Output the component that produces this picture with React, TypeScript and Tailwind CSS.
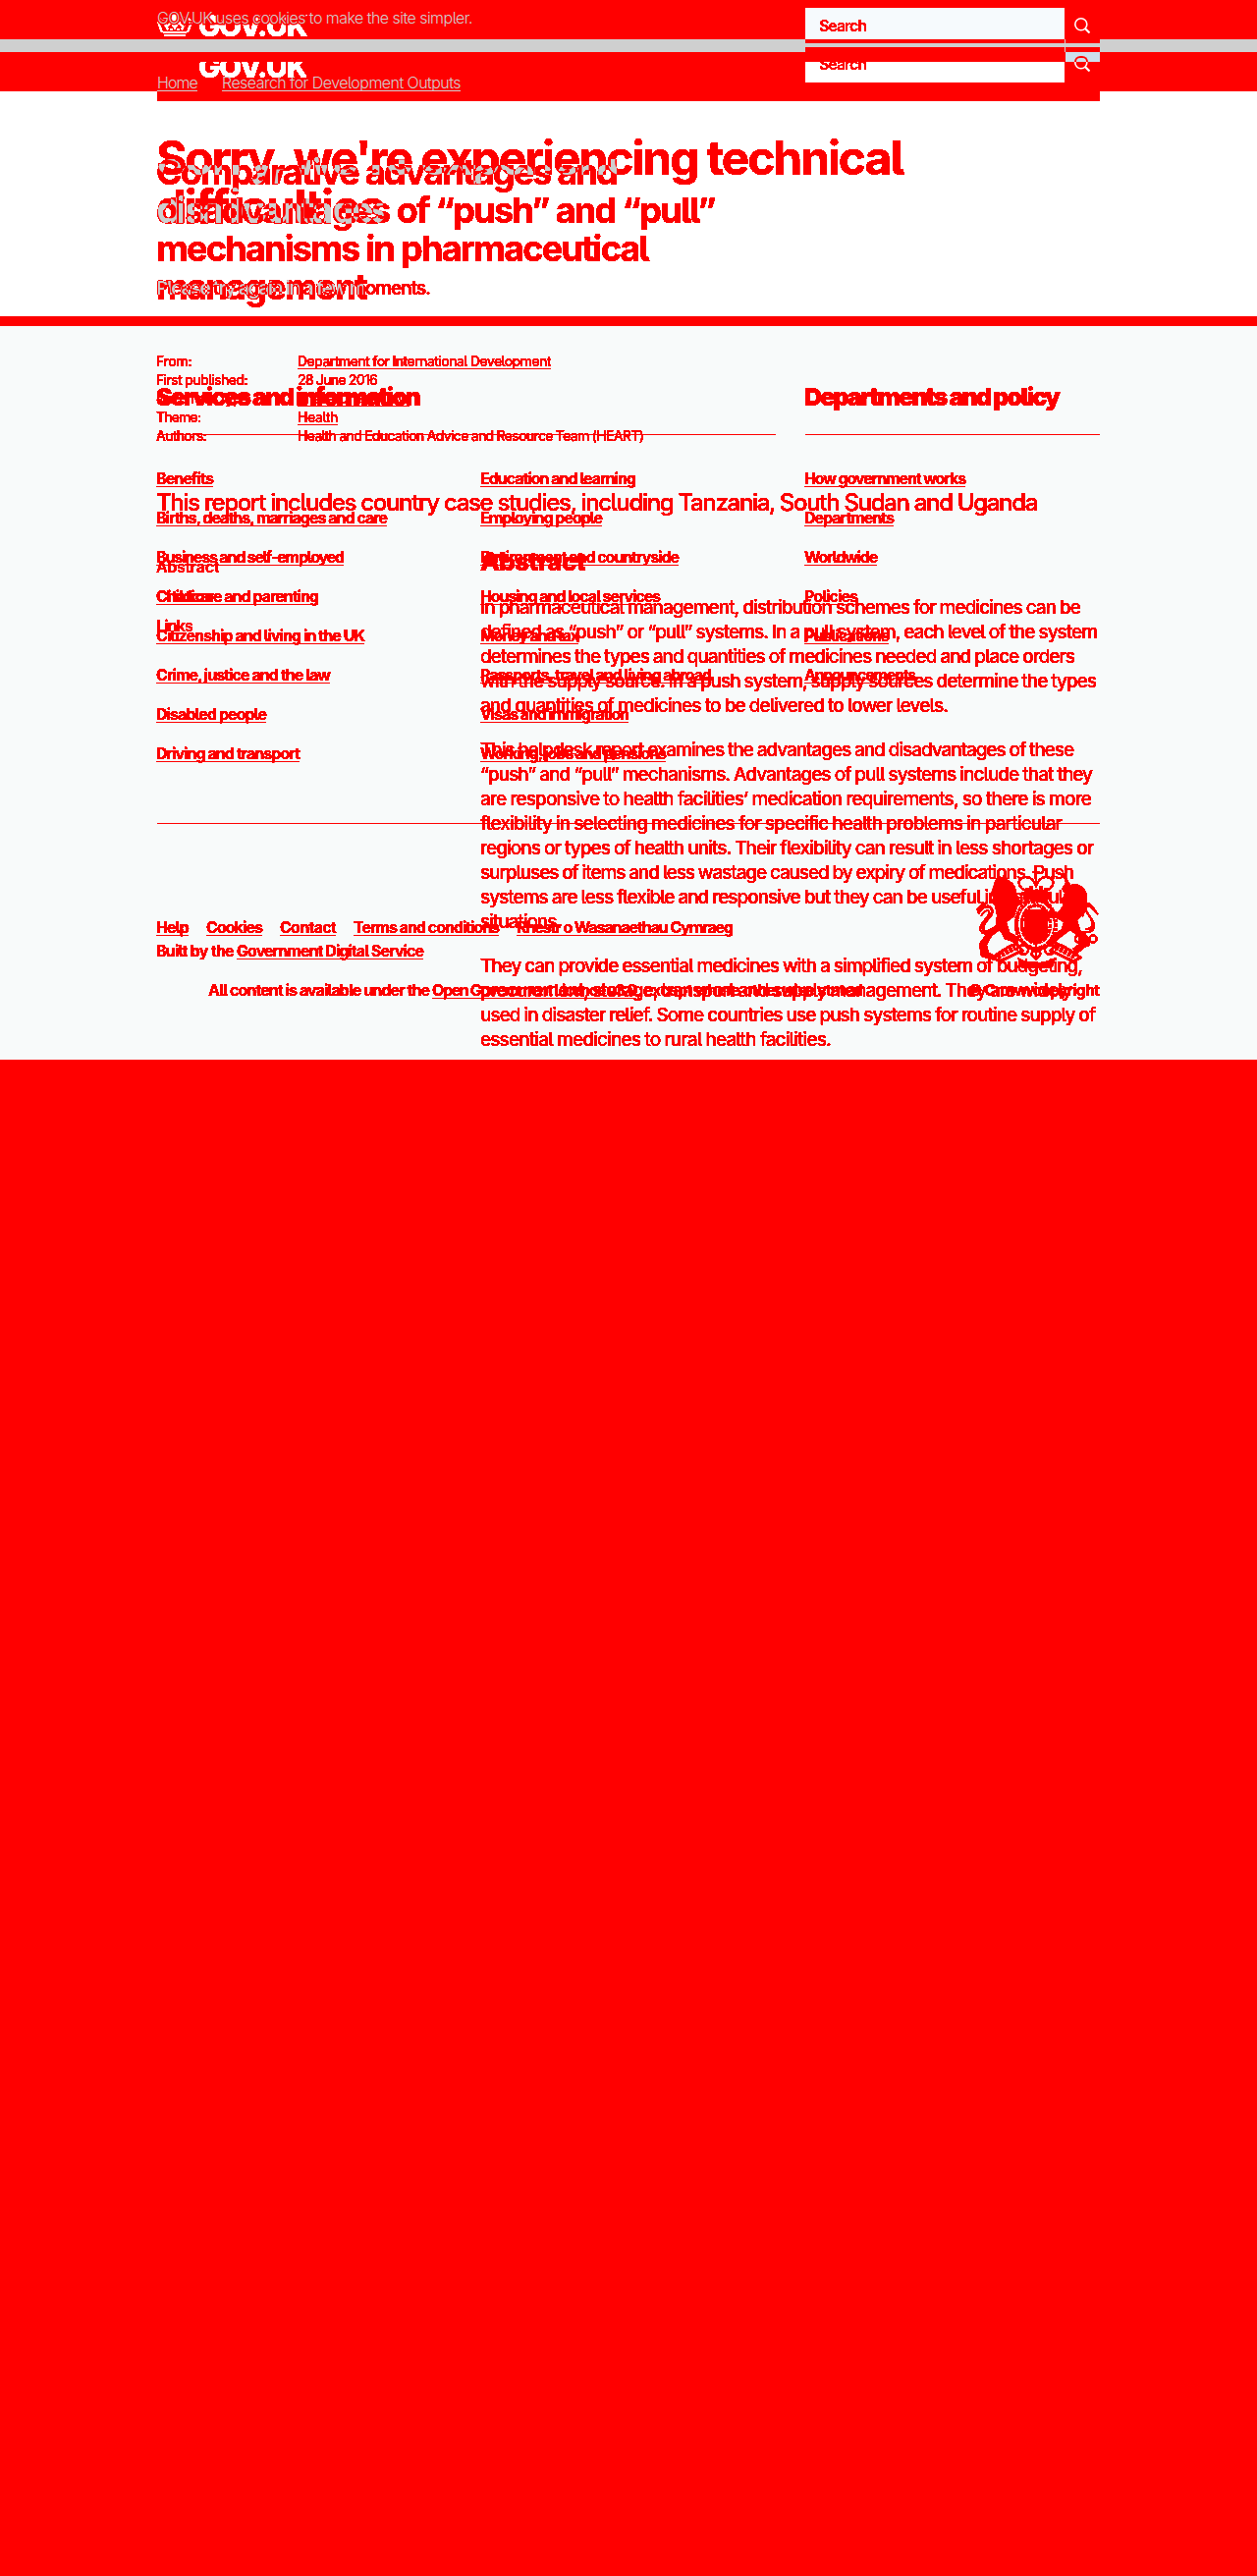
import { useLayoutEffect, useRef } from "react";

/* Single line of text whose tracking is adjusted so that it spans w pixels. */
function Fit({ w, children, className = "" }: { w: number; children: string; className?: string }) {
  const ref = useRef<HTMLSpanElement>(null);
  useLayoutEffect(() => {
    const el = ref.current;
    if (!el) return;
    el.style.letterSpacing = "0px";
    const gap = (w - el.getBoundingClientRect().width) / children.length;
    el.style.letterSpacing = `${gap}px`;
  }, [w, children]);
  return (
    <span ref={ref} className={`inline-block whitespace-pre ${className}`}>
      {children}
    </span>
  );
}

const link = "underline decoration-1 underline-offset-2 [text-decoration-skip-ink:none]";

type Line = [string, number];

const services: Line[] = [
  ["Benefits", 58],
  ["Births, deaths, marriages and care", 235],
  ["Business and self-employed", 191],
  ["Childcare and parenting", 165],
  ["Citizenship and living in the UK", 212],
  ["Crime, justice and the law", 177],
  ["Disabled people", 112],
  ["Driving and transport", 146],
];
const services2: Line[] = [
  ["Education and learning", 158],
  ["Employing people", 124],
  ["Environment and countryside", 202],
  ["Housing and local services", 183],
  ["Money and tax", 100],
  ["Passports, travel and living abroad", 235],
  ["Visas and immigration", 151],
  ["Working, jobs and pensions", 189],
];
const policy: Line[] = [
  ["How government works", 164],
  ["Departments", 91],
  ["Worldwide", 74],
  ["Policies", 54],
  ["Publications", 86],
  ["Announcements", 113],
];
const meta: [string, number, string, number, boolean][] = [
  ["From:", 36, "Department for International Development", 258, true],
  ["First published:", 93, "28 June 2016", 81, false],
  ["Document Type:", 96, "Literature review", 114, true],
  ["Theme:", 45, "Health", 41, true],
  ["Authors:", 51, "Health and Education Advice and Resource Team (HEART)", 352, false],
];
const paragraphs: Line[][] = [
  [
    ["In pharmaceutical management, distribution schemes for medicines can be", 611],
    ["defined as “push” or “pull” systems. In a pull system, each level of the system", 628],
    ["determines the types and quantities of medicines needed and place orders", 605],
    ["with the supply source. In a push system, supply sources determine the types", 627],
    ["and quantities of medicines to be delivered to lower levels.", 476],
  ],
  [
    ["This helpdesk report examines the advantages and disadvantages of these", 604],
    ["“push” and “pull” mechanisms. Advantages of pull systems include that they", 623],
    ["are responsive to health facilities’ medication requirements, so there is more", 622],
    ["flexibility in selecting medicines for specific health problems in particular", 592],
    ["regions or types of health units. Their flexibility can result in less shortages or", 624],
    ["surpluses of items and less wastage caused by expiry of medications. Push", 604],
    ["systems are less flexible and responsive but they can be useful in particular", 609],
    ["situations.", 82],
  ],
  [
    ["They can provide essential medicines with a simplified system of budgeting,", 613],
    ["procurement, storage, transport and supply management. They are widely", 602],
    ["used in disaster relief. Some countries use push systems for routine supply of", 626],
    ["essential medicines to rural health facilities.", 357],
  ],
];

function LinkList({ items }: { items: Line[] }) {
  return (
    <ul className="flex flex-col gap-5 text-[16px] leading-5 font-bold">
      {items.map(([t, w]) => (
        <li key={t} className="h-5">
          <Fit w={w} className={link}>{t}</Fit>
        </li>
      ))}
    </ul>
  );
}

function Crown() {
  return (
    <svg width="36" height="25" viewBox="0 0 36 25" fill="none" stroke="#fff" strokeWidth="2">
      <path d="M7 23h22M5 20 2 12M31 20l3-8M6 20h24" />
      <path d="M2 12c-2-5 3-8 6-4l2 7 3-5 5 5 5-5 3 5 2-7c3-4 8-1 6 4" strokeDasharray="3 1" />
      <path d="M8 12l3 5M28 12l-3 5M18 11v6M15 13h6M13 17h3M20 17h3" />
      <circle cx="18" cy="6" r="2.5" fill="#fff" />
      <circle cx="10" cy="6" r="1.5" />
      <circle cx="26" cy="6" r="1.5" />
      <path d="M18 0v4M15 2h6" />
    </svg>
  );
}

function Magnifier() {
  return (
    <svg width="16" height="16" viewBox="0 0 16 16" fill="none" stroke="#fff" strokeWidth="1.6">
      <circle cx="6.8" cy="6.8" r="6" />
      <path d="M11 11l4.5 4.5" strokeWidth="2.2" />
    </svg>
  );
}

function Crest() {
  return (
    <svg width="125" height="102" viewBox="0 0 125 102" fill="none" stroke="#f00" strokeWidth="2">
      <path d="M61 0v14M57 4h8M54 25h16" />
      <path d="M50 23c-10-6-7-14 1-14 5 0 8 4 10 9 2-5 5-9 10-9 8 0 11 8 1 14z" />
      <path d="M46 26h31M48 30h27M52 20v8M56 18v10M66 18v10M71 20v8" strokeWidth="2.5" />
      <ellipse cx="61" cy="57" rx="20" ry="25" strokeWidth="4" strokeDasharray="3 1" />
      <ellipse cx="61" cy="57" rx="14.5" ry="19" strokeWidth="3" strokeDasharray="4 1" />
      <path d="M50 43h22v17c0 8-5 12-11 15-6-3-11-7-11-15z" fill="#f00" />
      <path fill="#f00" stroke="none" d="M19 14l3-7 4 3 3-5 3 7c6 2 9 8 9 14l5 10-4 3-3 10-8 6 3 10 10 6-2 6-13-5-5-9-8 6-5 9 2 8 9 4-3 4-14-4-2-13 8-11 9-5 1-13-2-10-4-4 3-4-3-4z" />
      <path d="M1 43l7-8M2 46c5-8 12-9 14-4 3 7-10 11-9 20 3 6 9 0 14-3M5 39l6-4" strokeWidth="2.5" />
      <path d="M5 49c4-7 8-7 8-4 0 6-9 10-9 17 2 8 10 4 15-1" strokeWidth="1.5" />
      <path fill="#f00" stroke="none" d="M87 1l9 16c8-3 17 3 17 13l-2 15-8 8 3 10 8 7-1 9-10 8-5-5 7-5-1-7-8-7-12 9-7 7-4-2 5-9 9-6 2-7-9-5-6 1-3-6 5-2 7 2 6-7-3-6 5-5-4-6 4-6z" />
      <path d="M111 62c12 1 7-10 3-15-5-7-2-12 2-10 4 3 5 8 8 10M109 49c-4-9 6-14 10-7M108 65c17 2 12-10 8-15" strokeWidth="2" />
      <circle cx="105" cy="72" r="4" />
      <circle cx="112" cy="76" r="3" />
      <circle cx="119" cy="72" r="3.5" />
      <path d="M17 91c8-6 14-11 24-14l6 7-23 11zM106 91c-8-6-14-11-24-14l-6 7 23 11z" strokeWidth="2.5" />
      <path d="M22 90l18-9M100 90l-18-9" strokeWidth="5" strokeDasharray="3 1.5" />
      <path d="M41 84c3-9 13-6 12 0-2 6-10 4-8 0M82 84c-3-9-13-6-12 0 2 6 10 4 8 0M54 80l7 6 7-6M61 78v15M56 87l5 6 5-6-5-6z" />
      <path d="M44 93c11 6 23 6 35 0l-2 7c-10 3-21 3-31 0z" fill="#f00" />
    </svg>
  );
}

function ErrorPage() {
  return (
    <div className="col-start-1 row-start-1 flex flex-col">
      <h1 className="mt-[43px] text-[48px] leading-[50px] font-bold">
        <div className="h-[50px]"><Fit w={760}>Sorry, we're experiencing technical</Fit></div>
        <div className="h-[50px]"><Fit w={232}>difficulties</Fit></div>
      </h1>
      <p className="mt-[45px] h-[25px] text-[19px] leading-[25px] font-semibold">
        <Fit w={279}>Please try again in a few moments.</Fit>
      </p>
      <div className="mt-[83px] grid h-[30px] grid-cols-[660px_300px] text-[25px] leading-[30px] font-black">
        <h2><Fit w={268}>Services and information</Fit></h2>
        <h2><Fit w={259}>Departments and policy</Fit></h2>
      </div>
      <div className="mt-[58px] grid h-[320px] grid-cols-[330px_330px_300px]">
        <LinkList items={services} />
        <LinkList items={services2} />
        <LinkList items={policy} />
      </div>
      <footer className="mt-[87px] flex justify-between text-[16px] leading-5 font-bold">
        <div className="pt-[50px]">
          <ul className="flex h-5 gap-[18px]">
            {([["Help", 33], ["Cookies", 57], ["Contact", 57], ["Terms and conditions", 148], ["Rhestr o Wasanaethau Cymraeg", 220]] as Line[]).map(([t, w]) => (
              <li key={t}><Fit w={w} className={link}>{t}</Fit></li>
            ))}
          </ul>
          <p className="mt-1 flex h-5">
            <Fit w={82}>{"Built by the "}</Fit>
            <Fit w={190} className={link}>Government Digital Service</Fit>
          </p>
          <p className="mt-5 ml-[53px] flex h-5">
            <Fit w={228}>{"All content is available under the "}</Fit>
            <Fit w={208} className={link}>Open Government Licence v3.0</Fit>
            <Fit w={230}>, except where otherwise stated</Fit>
          </p>
        </div>
        <div className="flex flex-col items-end gap-3">
          <Crest />
          <Fit w={133}>© Crown copyright</Fit>
        </div>
      </footer>
    </div>
  );
}

function ReportPage() {
  return (
    <div className="col-start-1 row-start-1 flex flex-col mix-blend-screen">
      <h1 className="mt-[63px] text-[36px] leading-[39px] font-bold [filter:url(#swap)]">
        {([["Comparative advantages and", 469], ["disadvantages of “push” and “pull”", 569], ["mechanisms in pharmaceutical", 501], ["management", 214]] as Line[]).map(([t, w]) => (
          <div key={t} className="h-[39px]"><Fit w={w}>{t}</Fit></div>
        ))}
      </h1>
      <dl className="mt-[46px] text-[14px] leading-[19px] font-medium">
        {meta.map(([k, kw, v, vw, isLink]) => (
          <div key={k} className="grid h-[19px] grid-cols-[144px_1fr]">
            <dt><Fit w={kw}>{k}</Fit></dt>
            <dd><Fit w={vw} className={isLink ? link : ""}>{v}</Fit></dd>
          </div>
        ))}
      </dl>
      <p className="mt-11 h-[30px] text-[24px] leading-[30px] font-medium">
        <Fit w={897}>This report includes country case studies, including Tanzania, South Sudan and Uganda</Fit>
      </p>
      <div className="mt-[30px] grid grid-cols-[330px_630px]">
        <nav className="flex flex-col gap-[10px] pt-[10px] text-[16px] leading-5 font-semibold">
          <div className="h-5"><Fit w={64}>Abstract</Fit></div>
          <div className="h-5"><Fit w={59}>Citation</Fit></div>
          <div className="h-5"><Fit w={37}>Links</Fit></div>
        </nav>
        <article>
          <h2 className="h-[30px] text-[26px] leading-[30px] font-extrabold"><Fit w={107}>Abstract</Fit></h2>
          <div className="mt-[19px] flex flex-col gap-5 text-[19px] leading-[25px] font-medium">
            {paragraphs.map((p, i) => (
              <div key={i}>
                {p.map(([t, w]) => (
                  <div key={t} className="h-[25px]"><Fit w={w}>{t}</Fit></div>
                ))}
              </div>
            ))}
          </div>
        </article>
      </div>
    </div>
  );
}

function Header() {
  return (
    <header className="relative h-[93px] bg-[#f00]">
      <div className="absolute inset-x-0 top-10 h-[13px] bg-[#cfcfcf]" />
      <div className="relative mx-auto flex h-[103px] w-[960px] justify-between">
        <div className="relative w-[480px]">
          <div className="[filter:url(#crisp)]">
            <div className="absolute top-[13px] left-0"><Crown /></div>
            <div className="absolute top-[8px] left-[42px] text-[30px] leading-[36px] font-extrabold text-white">
              <Fit w={110}>GOV.UK</Fit>
            </div>
            <div className="absolute top-[63px] left-[42px] flex h-[16px] items-end overflow-hidden text-[30px] leading-[36px] font-extrabold text-white">
              <div className="-mb-[7px]"><Fit w={110}>GOV.UK</Fit></div>
            </div>
          </div>
          <p className="absolute top-[8px] left-0 text-[16px] leading-5 font-light text-[#cfcfcf] [-webkit-text-stroke:3px_#f00] [paint-order:stroke_fill]">
            <Fit w={321}>GOV.UK uses cookies to make the site simpler.</Fit>
          </p>
          <nav className="absolute top-[74px] left-0 flex gap-[25px] text-[16px] leading-5 font-light text-[#cfcfcf]">
            <Fit w={41} className={link}>Home</Fit>
            <Fit w={243} className={link}>Research for Development Outputs</Fit>
          </nav>
        </div>
        <div className="grid h-[103px] w-[300px] grid-cols-[264px_1px_35px] grid-rows-[8px_32px_4px_4px_5px_10px_21px_19px] text-[#f00]">
          <div className="col-start-1 row-start-2 overflow-hidden bg-[#f6fafd] pl-[14px] text-[16px] font-semibold">
            <div className="pt-[8px] leading-5 [filter:url(#crisp)]"><Fit w={48}>Search</Fit></div>
          </div>
          <div className="col-start-3 row-start-2 pt-[10px] pl-[9px]"><Magnifier /></div>
          <div className="col-start-1 row-start-3 bg-[#f00]" />
          <div className="col-start-3 row-start-3 bg-[#f00]" />
          <div className="col-start-1 row-start-5 bg-[#f00]" />
          <div className="col-start-3 row-start-5 bg-[#f00]" />
          <div className="col-start-3 row-start-6 bg-[#cddfec]" />
          <div className="col-start-1 row-start-7 overflow-hidden bg-white pl-[14px] text-[16px] font-semibold">
            <div className="-mt-[8px] leading-5 [filter:url(#crisp)]"><Fit w={48}>Search</Fit></div>
          </div>
          <div className="relative col-start-3 row-start-7 pl-[9px]">
            <div className="-mt-[6px]"><Magnifier /></div>
            <div className="absolute -top-[6px] left-[9px] h-[6px] w-[14px] rounded-t-full border-2 border-b-0 border-[#f00]" />
          </div>
        </div>
      </div>
    </header>
  );
}

export default function App() {
  return (
    <div className="h-[2623px] w-[1280px] overflow-hidden bg-[#f00] font-['Inter','Liberation_Sans',sans-serif] text-[#f00] [font-feature-settings:'cv05']">
      <svg width="0" height="0" className="absolute">
        <filter id="crisp" colorInterpolationFilters="sRGB" x="-5%" y="-5%" width="110%" height="110%">
          <feComponentTransfer><feFuncA type="linear" slope="20" intercept="-4" /></feComponentTransfer>
        </filter>
        <filter id="swap" colorInterpolationFilters="sRGB" x="0" y="0" width="100%" height="110%">
          <feComponentTransfer><feFuncA type="linear" slope="20" intercept="-3" /></feComponentTransfer>
          <feColorMatrix values="0 0 0 0 0  1 0 0 0 0  0 0 0 0 0  0 0 0 1 0" />
        </filter>
        <filter id="merge" colorInterpolationFilters="sRGB" x="0" y="0" width="100%" height="100%">
          <feComponentTransfer><feFuncA type="linear" slope="20" intercept="-2.5" /></feComponentTransfer>
          <feColorMatrix values="0.5 0.5 0 0 0  0.5 0.5 0 0 0  0.5 0.5 0 0 0  0 0 0 1 0" />
          <feComponentTransfer>
            <feFuncR type="table" tableValues="1 1 0.81" />
            <feFuncG type="table" tableValues="0 0 0.81" />
            <feFuncB type="table" tableValues="0 0 0.81" />
          </feComponentTransfer>
        </filter>
      </svg>
      <Header />
      <div className="grid grid-cols-[1280px]">
        <div className="col-start-1 row-start-1">
          <div className="h-[229px] bg-white"><div className="mx-auto h-[10px] w-[960px] bg-[#f00]" /></div>
          <div className="h-[10px]" />
          <div className="h-[747px] bg-[#f8fafa]">
            <div className="mx-auto w-[960px] pt-[110px]">
              <div className="flex gap-[30px]">
                <div className="h-px w-[630px] bg-[#f00]" />
                <div className="h-px w-[300px] bg-[#f00]" />
              </div>
              <div className="mt-[395px] h-px bg-[#f00]" />
            </div>
          </div>
        </div>
        <main className="col-start-1 row-start-1 ml-[157px] grid w-[966px] grid-cols-[960px] pl-[2px] [filter:url(#merge)]">
          <ErrorPage />
          <ReportPage />
        </main>
      </div>
    </div>
  );
}
